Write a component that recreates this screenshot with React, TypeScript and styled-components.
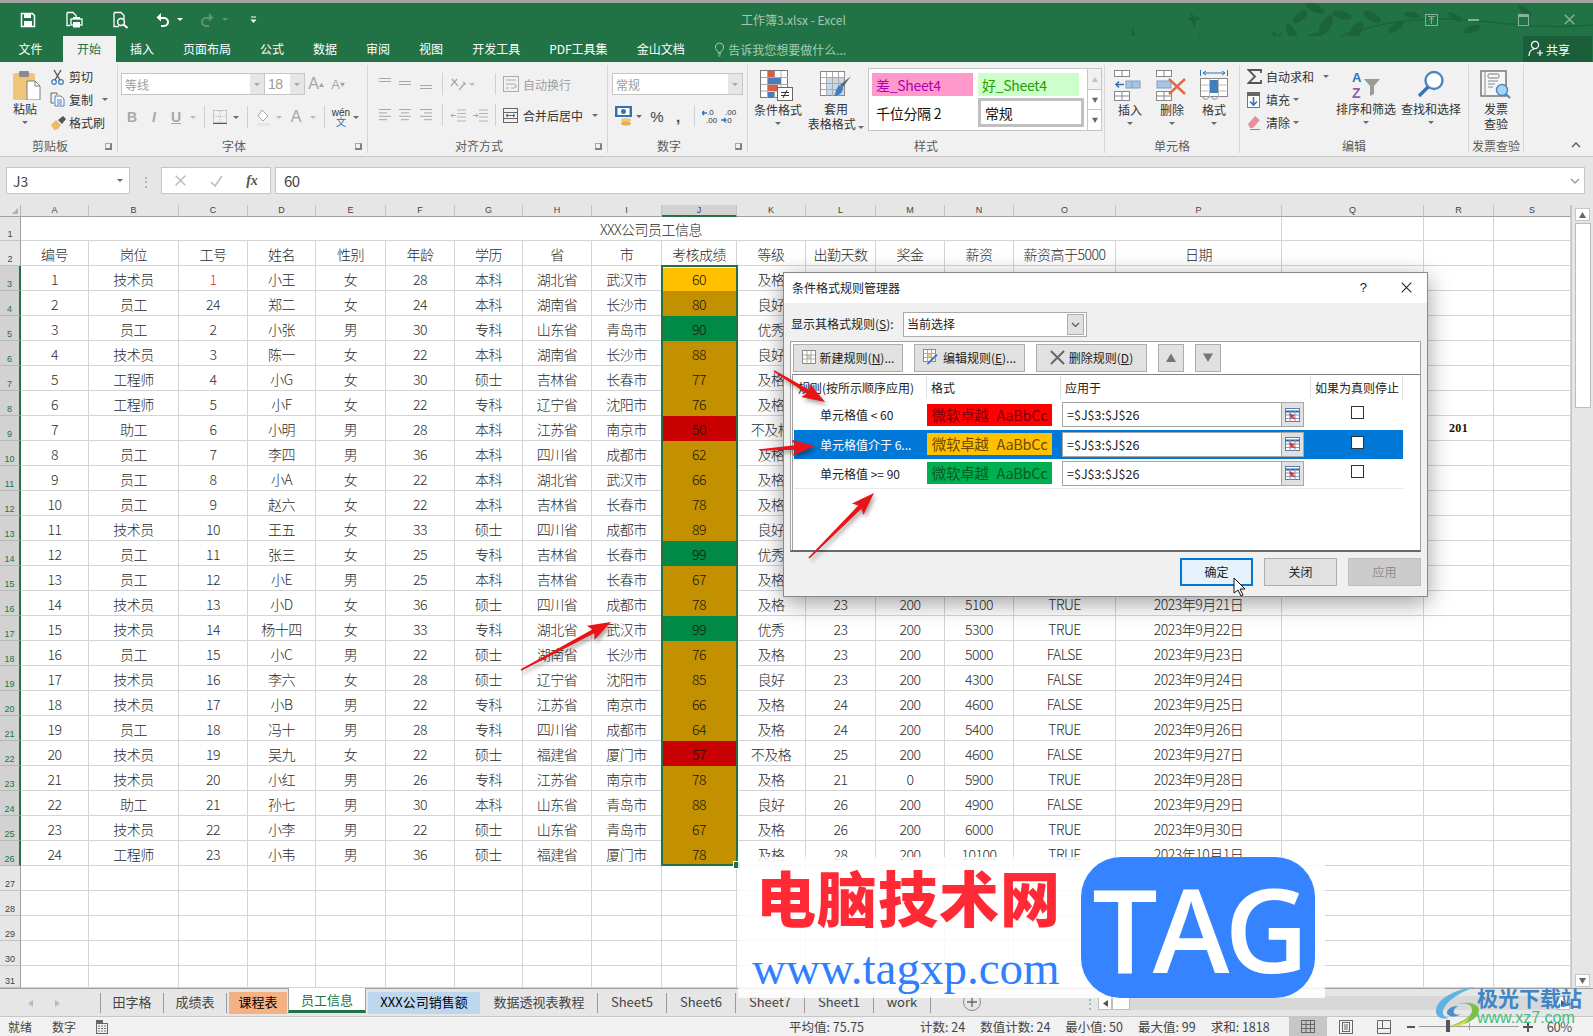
import React from "react";
import styled, { createGlobalStyle } from "styled-components";

const CJK = `"Noto Sans CJK SC","Noto Sans",sans-serif`;
const NARROW = `"Noto Sans CJK SC","Noto Sans",sans-serif`;
const GREEN = "#217346";

const Global = createGlobalStyle`
  html, body { margin: 0; padding: 0; background: #fff; }
  body { font-family: ${CJK}; font-size: 12px; color: #222; }
  * { box-sizing: border-box; }
`;

const Window = styled.div`
  position: relative; width: 1593px; height: 1036px; overflow: hidden;
  display: flex; flex-direction: column; border-top: 3px solid #a4a4a4; background: #fff;
`;

/* ---------- title ---------- */
const TitleBar = styled.header`
  position: relative; flex: 0 0 33px; background: ${GREEN}; display: flex; align-items: center;
`;
const Decor = styled.svg`position: absolute; left: 1120px; top: 0; pointer-events: none;`;
const Qat = styled.div`display: flex; align-items: center; padding-left: 20px; height: 100%; position: relative;`;
const QatItem = styled.span<{ $w: number }>`width: ${p => p.$w}px; display: flex; justify-content: flex-start; align-items: center;`;
const DocTitle = styled.div`
  position: absolute; left: 741px; top: 9px; font-size: 12px; line-height: 16px; color: #a6c7b4; white-space: nowrap;
`;
const WinBtns = styled.div`position: absolute; left: 1420px; top: 0; height: 100%; display: flex; align-items: center;`;
const WinBtn = styled.span<{ $w: number }>`width: ${p => p.$w}px; display: flex; justify-content: center; color: #86b09a;`;

const TabRow = styled.nav`
  position: relative; flex: 0 0 26px; background: ${GREEN}; display: flex; padding-left: 4px; align-items: stretch;
`;
const RibbonTab = styled.span<{ $on?: boolean }>`
  padding: 0 14.5px; line-height: 25px; font-size: 12px; white-space: nowrap;
  color: ${p => (p.$on ? GREEN : "#fff")}; background: ${p => (p.$on ? "#f1f1f1" : "transparent")};
  &:first-child { padding-right: 20px; }
`;
const Tell = styled.span`
  display: flex; align-items: center; gap: 3px; margin-left: 15px; color: #a6cdb7; font-size: 12px;
`;
const Share = styled.div`
  position: absolute; left: 1523px; top: 0; width: 69px; height: 26px; background: #1b5e39; color: #fff;
  display: flex; align-items: center; gap: 2px; padding-left: 5px; font-size: 12px;
`;

/* ---------- ribbon ---------- */
const Ribbon = styled.section`
  flex: 0 0 95px; background: #f1f1f1; border-bottom: 1px solid #c8c8c8; display: flex; padding-top: 3px; position: relative;
`;
const Group = styled.div<{ $w: number }>`
  flex: 0 0 ${p => p.$w}px; height: 88px; border-right: 1px solid #d6d6d6; display: flex; flex-direction: column;
`;
const GroupBody = styled.div<{ $pt?: number; $pl?: number }>`
  flex: 1; min-height: 0; display: flex; padding-top: ${p => p.$pt ?? 0}px; padding-left: ${p => p.$pl ?? 0}px;
`;
const ColBody = styled(GroupBody)`flex-direction: column;`;
const GroupFooter = styled.div<{ $launch?: boolean }>`
  flex: 0 0 14px; display: grid; grid-template-columns: 1fr auto 1fr ${p => (p.$launch ? "17px" : "")}; align-items: center;
  font-size: 12px; line-height: 14px; color: #5c5c5c;
`;
const GroupName = styled.span`grid-column: 2; white-space: nowrap;`;
const Launcher = styled.span`
  grid-column: 4; justify-self: center; width: 7px; height: 7px; border: 1px solid #a8a8a8;
  border-right: 2px solid #808080; border-bottom: 2px solid #808080;
`;
const Collapse = styled.span`position: absolute; left: 1571px; top: 80px; color: #555; display: flex;`;

const Big = styled.div<{ $w: number }>`
  flex: 0 0 ${p => p.$w}px; min-width: 0; display: flex; flex-direction: column; align-items: center; padding-top: 5px;
  font-size: 12px; line-height: 15px; color: #333; white-space: nowrap;
`;
const BigLabel = styled.span<{ $mt?: number }>`margin-top: ${p => p.$mt ?? 1}px; text-align: center;`;
const Caret = styled.i<{ $c?: string }>`
  display: inline-block; width: 0; height: 0; border: 3px solid transparent; border-top: 3.5px solid ${p => p.$c ?? "#6a6a6a"}; border-bottom: 0;
`;
const BigCaret = styled(Caret)`margin-top: 5px;`;
const Stack = styled.div<{ $w: number; $pl?: number }>`
  flex: 0 0 ${p => p.$w}px; min-width: 0; display: flex; flex-direction: column; padding-left: ${p => p.$pl ?? 0}px;
`;
const StackRow = styled.div`
  height: 23px; display: flex; align-items: center; font-size: 12px; color: #333; white-space: nowrap;
`;
const StackIcon = styled.span<{ $w: number }>`flex: 0 0 ${p => p.$w}px; display: flex; align-items: center;`;
const PasteWrap = styled.span`margin-left: 4px; display: flex;`;
const Tools = styled.div<{ $h: number; $mt?: number }>`
  height: ${p => p.$h}px; margin-top: ${p => p.$mt ?? 0}px; display: flex; align-items: center; white-space: nowrap;
`;
const Tool = styled.span<{ $w: number; $dim?: boolean }>`
  flex: 0 0 ${p => p.$w}px; display: flex; justify-content: center; align-items: center;
  color: ${p => (p.$dim ? "#a8a8a8" : "#444")};
`;
const Letter = styled.span<{ $i?: boolean; $u?: boolean; $s?: number; $w?: number; $c?: string }>`
  font: ${p => (p.$i ? "italic " : "")}${p => p.$w ?? 700} ${p => p.$s ?? 14}px "Liberation Sans", sans-serif;
  text-decoration: ${p => (p.$u ? "underline" : "none")};
  ${p => (p.$c ? `color: ${p.$c};` : "")}
`;
const VSep = styled.i<{ $ml?: number; $mr?: number }>`
  flex: 0 0 1px; height: 22px; background: #d0d0d0; margin-left: ${p => p.$ml ?? 5}px; margin-right: ${p => p.$mr ?? 5}px;
`;
const Combo = styled.div<{ $w: number }>`
  flex: 0 0 ${p => p.$w}px; height: 22px; background: #fff; border: 1px solid #c6c6c6; display: flex; align-items: center;
  color: #9c9c9c; font-size: 12px; padding-left: 3px;
`;
const ComboJoin = styled(Combo)`border-left: 0;`;
const ComboValue = styled.span`flex: 1;`;
const ComboSize = styled(ComboValue)`font: 14px "Liberation Sans", sans-serif; letter-spacing: -.5px;`;
const ComboDrop = styled.span`
  flex: 0 0 14px; align-self: stretch; background: #e6e6e6; display: flex; align-items: center; justify-content: center;
`;
const ToolText = styled.span<{ $dim?: boolean; $ml?: number }>`
  font-size: 12px; color: ${p => (p.$dim ? "#a0a0a0" : "#333")}; margin-left: ${p => p.$ml ?? 4}px;
`;
const Wen = styled.span`
  display: flex; flex-direction: column; align-items: center; font: 10px/9px "Liberation Sans", sans-serif; color: #333;
`;
const WenHan = styled.span`color: #2f6fb0; font: 10px/10px ${CJK};`;

const Gallery = styled.div`
  flex: 0 0 229px; height: 63px; margin-top: 3px; margin-left: 4px; display: flex;
`;
const GalleryCells = styled.div`
  flex: 0 0 215px; background: #fff; border: 1px solid #c6c6c6; padding: 4px 3px 2px; display: grid;
  grid-template-columns: 106px 106px; grid-template-rows: 23px 29px; row-gap: 2px; font-size: 14px;
`;
const StyleCell = styled.span<{ $bg?: string; $c?: string; $box?: boolean }>`
  background: ${p => p.$bg ?? "#fff"}; color: ${p => p.$c ?? "#111"}; display: flex; align-items: center; padding-left: 4px;
  font-family: ${NARROW}; white-space: nowrap; letter-spacing: -.3px; margin-right: ${p => (p.$bg ? "5px" : "0")};
  border: ${p => (p.$box ? "3px solid #c0c0c0" : "0")};
`;
const GalleryScroll = styled.div`flex: 0 0 14px; display: flex; flex-direction: column; border: 1px solid #c6c6c6; border-left: 0; background: #fff;`;
const GalleryBtn = styled.span<{ $bg?: string }>`
  flex: 1; display: flex; align-items: center; justify-content: center; background: ${p => p.$bg ?? "#fff"};
  & + & { border-top: 1px solid #c6c6c6; }
`;

/* ---------- formula bar ---------- */
const FormulaBar = styled.div`
  flex: 0 0 48px; background: #e6e6e6; display: flex; align-items: flex-start; padding: 10px 8px 0 6px;
`;
const NameBox = styled.div`
  flex: 0 0 124px; height: 27px; background: #fff; border: 1px solid #c6c6c6; display: flex; align-items: center;
  justify-content: space-between; padding: 0 6px; font: 14px ${NARROW}; color: #444;
`;
const Dots = styled.span`flex: 0 0 31px; height: 27px; display: flex; align-items: center; justify-content: center; color: #999;`;
const FxBox = styled.div`
  flex: 0 0 108px; height: 27px; background: #fff; border: 1px solid #c6c6c6; display: grid; grid-template-columns: repeat(3, 36px);
  align-items: center; justify-items: center; color: #bdbdbd; margin-right: 4px;
`;
const Fx = styled.span`font: italic bold 14px "Liberation Serif", serif; color: #555;`;
const FormulaInput = styled.div`
  flex: 1; height: 27px; background: #fff; border: 1px solid #c6c6c6; display: flex; align-items: center;
  justify-content: space-between; padding: 0 4px 0 8px; font: 15px ${NARROW}; color: #444; letter-spacing: -.5px;
`;

/* ---------- grid ---------- */
const widths = [21, 68, 90, 69, 68, 70, 69, 68, 69, 70, 75, 69, 70, 69, 69, 102, 166, 142, 70, 77];
const letters = "ABCDEFGHIJKLMNOPQRS".split("");

const SheetArea = styled.div`flex: 1; min-height: 0; display: flex;`;
const Grid = styled.div`
  flex: 0 0 1571px; display: grid; overflow: hidden; position: relative;
  grid-template-columns: ${widths.map(w => `${w}px`).join(" ")};
  grid-template-rows: 12px 24px repeat(29, 25px);
  font: 300 14px ${NARROW}; color: #2b2b2b; letter-spacing: -.5px;
`;
const Corner = styled.div`
  background: #e6e6e6; border-right: 1px solid #b5b5b5; border-bottom: 1px solid #9f9f9f; position: relative;
  &::after { content: ""; position: absolute; right: 2px; bottom: 2px; border: 3px solid transparent; border-right-color: #b0b0b0; border-bottom-color: #b0b0b0; }
`;
const ColHead = styled.div<{ $on?: boolean }>`
  background: ${p => (p.$on ? "#d2d2d2" : "#e6e6e6")}; border-right: 1px solid #c4c4c4;
  border-bottom: ${p => (p.$on ? `2px solid ${GREEN}` : "1px solid #9f9f9f")}; letter-spacing: 0;
  font: 9px/11px "Liberation Sans", sans-serif; color: #444; text-align: center;
`;
const RowHead = styled.div<{ $on?: boolean }>`
  background: ${p => (p.$on ? "#d2d2d2" : "#e6e6e6")}; border-bottom: 1px solid ${p => (p.$on ? "#b8b8b8" : "#c4c4c4")};
  border-right: ${p => (p.$on ? `2px solid ${GREEN}` : "1px solid #9f9f9f")}; letter-spacing: 0;
  font: 9px/10px "Liberation Sans", sans-serif; color: ${p => (p.$on ? GREEN : "#444")};
  display: flex; align-items: flex-end; justify-content: center; padding-bottom: 1px;
`;
const Cell = styled.div<{ $fill?: string; $red?: boolean; $span?: number; $bold?: boolean }>`
  display: flex; align-items: center; justify-content: center; white-space: nowrap; overflow: hidden; padding-top: 1px;
  background: ${p => p.$fill ?? "#fff"}; color: ${p => (p.$red ? "#ff2020" : p.$fill ? "#1c1500" : "inherit")};
  border-right: 1px solid ${p => (p.$fill ? p.$fill : "#d4d4d4")}; border-bottom: 1px solid ${p => (p.$fill ? p.$fill : "#d4d4d4")};
  ${p => (p.$span ? `grid-column: span ${p.$span};` : "")}
  ${p => (p.$bold ? `font: bold 12px "Liberation Serif", serif; color: #111; letter-spacing: .4px;` : "")}
`;
const Selection = styled.div`
  position: absolute; grid-column: 11 / 12; grid-row: 4 / 28; inset: -1px -1px 0 -1px; z-index: 2; pointer-events: none;
  border: 2px solid ${GREEN}; box-shadow: inset 0 1px 0 #fff;
`;
const Handle = styled.i`
  position: absolute; right: -4px; bottom: -4px; width: 6px; height: 6px; background: ${GREEN}; outline: 1px solid #fff;
`;
const VScroll = styled.aside`
  flex: 1; background: #e6e6e6; border-left: 1px solid #c6c6c6; display: flex; flex-direction: column; align-items: center;
  padding: 3px 0 1px;
`;
const ScrollBtn = styled.span`
  width: 15px; height: 13px; background: #fff; border: 1px solid #c6c6c6; display: flex; align-items: center; justify-content: center;
`;
const Thumb = styled.span`width: 16px; height: 185px; background: #fff; border: 1px solid #bdbdbd; margin-top: 2px;`;
const Fill = styled.span`flex: 1;`;

/* ---------- sheet tabs ---------- */
const TabsBar = styled.div`
  flex: 0 0 28px; background: #e6e6e6; border-top: 1px solid #9f9f9f; display: flex; align-items: flex-start;
`;
const Nav = styled.div`
  flex: 0 0 101px; height: 20px; margin-top: 4px; display: flex; align-items: center; padding-left: 27px; gap: 20px;
  border-right: 1px solid #9a9a9a; color: #b8b8b8;
`;
const SheetTab = styled.span<{ $w: number; $bg?: string; $on?: boolean }>`
  flex: 0 0 ${p => p.$w}px; display: flex; align-items: center; justify-content: center; white-space: nowrap; font-size: 13px;
  ${p => p.$on
    ? `height: 25px; margin-top: -1px; background:#fff; color:${GREEN}; border-left:1px solid #9f9f9f; border-right:1px solid #9f9f9f; border-bottom:3px solid ${GREEN};`
    : p.$bg
      ? `height: 22px; margin: 3px 1px 0 2px; padding-bottom: 3px; background:${p.$bg}; color:#000;`
      : `height: 20px; margin-top: 4px; padding-bottom: 4px; color:#444; border-right:1px solid #9a9a9a;`}
`;
const AddSheet = styled.span`
  flex: 0 0 18px; height: 18px; border: 1.5px solid #8a8a8a; border-radius: 50%; margin: 4px 0 0 32px; color: #666;
  display: flex; align-items: center; justify-content: center;
`;
const HDots = styled.span`flex: 0 0 16px; margin: 5px 0 0 101px; color: #999; height: 16px; display: flex; justify-content: center; align-items: center;`;
const HScroll = styled.div`
  flex: 1; height: 14px; margin: 7px 23px 0 0; background: #d8d8d8; display: flex; justify-content: space-between;
`;
const HBtns = styled.span`display: flex;`;
const HBtn = styled.span<{ $w: number }>`
  width: ${p => p.$w}px; height: 14px; background: #fff; border: 1px solid #bdbdbd; display: flex; align-items: center; justify-content: center;
`;

/* ---------- status ---------- */
const Status = styled.footer`
  flex: 0 0 19px; background: #f1f1f1; border-top: 1px solid #c6c6c6; display: flex; align-items: center;
  font-size: 12px; color: #444; white-space: nowrap;
`;
const StatusLeft = styled.div`flex: 0 0 789px; display: flex; align-items: center; gap: 20px; padding-left: 8px;`;
const Stat = styled.span<{ $ml?: number }>`margin-left: ${p => p.$ml ?? 15}px; font-family: ${NARROW}; font-size: 12.5px;`;
const Views = styled.div`display: flex; align-self: stretch; margin-left: 19px;`;
const ViewBtn = styled.span<{ $on?: boolean }>`
  width: 38px; display: flex; align-items: center; justify-content: center; background: ${p => (p.$on ? "#c6c6c6" : "transparent")}; color: #555;
`;
const Zoom = styled.div`display: flex; align-items: center; margin-left: 4px; color: #555;`;
const ZoomTrack = styled.span`
  position: relative; width: 100px; height: 1px; background: #9a9a9a; margin: 0 4px;
`;
const ZoomThumb = styled.i`position: absolute; left: 27px; top: -6px; width: 4px; height: 12px; background: #555;`;
const ZoomTick = styled.i`position: absolute; left: 50px; top: -3px; width: 1px; height: 7px; background: #9a9a9a;`;
const ZoomText = styled.span`margin-left: 14px; font: 13px ${NARROW}; letter-spacing: -.4px;`;

/* ---------- dialog ---------- */
const Dialog = styled.div`
  position: absolute; left: 783px; top: 269px; width: 645px; height: 325px; background: #f0f0f0; border: 1px solid #8a8a8a;
  box-shadow: 0 6px 22px rgba(0,0,0,.38); z-index: 5; display: flex; flex-direction: column; color: #222;
  font-size: 12px;
`;
const DlgTitle = styled.div`
  flex: 0 0 30px; background: #fff; display: flex; align-items: center; padding: 0 8px 2px; font-size: 12px;
`;
const DlgTitleText = styled.span`flex: 1;`;
const DlgHelp = styled.span`font: 13px "Liberation Sans", sans-serif; margin-right: 34px;`;
const DlgClose = styled.span`margin-right: 7px; display: flex; color: #333;`;
const ShowRow = styled.div`
  flex: 0 0 25px; margin: 9px 7px 4px; display: flex; align-items: center; font-family: ${CJK}; white-space: nowrap;
`;
const ShowLabel = styled.span`flex: 0 0 112px; margin-top: -3px;`;
const ShowSelect = styled.div`
  flex: 0 0 184px; height: 25px; background: #fff; border: 1px solid #ababab; display: flex; align-items: center; padding: 0 2px 0 3px;
`;
const ShowValue = styled(({ className, children }: { className?: string; children: React.ReactNode }) => <span className={className}>{children}</span>)`
  flex: 1; margin-top: -2px;
`;
const ShowBtn = styled.span`
  flex: 0 0 17px; height: 21px; background: #e1e1e1; border: 1px solid #adadad; display: flex; align-items: center; justify-content: center; color: #444;
`;
const Panel = styled.div`
  flex: 0 0 211px; margin: 0 6px; background: #fff; border: 1px solid #a0a0a0; border-bottom: 2px solid #696969; display: flex; flex-direction: column;
`;
const PanelBar = styled.div`
  flex: 0 0 32px; display: flex; align-items: center; padding: 0 2px; gap: 11px;
`;
const DlgBtn = styled.span<{ $w: number }>`
  flex: 0 0 ${p => p.$w}px; height: 28px; background: #e1e1e1; border: 1px solid #adadad; display: flex; align-items: center; justify-content: center; gap: 4px;
  white-space: nowrap; padding-bottom: 2px;
`;
const ListBox = styled.div`flex: 1; border-top: 1px solid #808080; border-left: 1px solid #a0a0a0; margin-left: 1px; padding-left: 1px;`;
const ruleCols = "133px 134px 250px 92px";
const ListHead = styled.div`
  height: 25px; width: 609px; display: grid; grid-template-columns: ${ruleCols}; align-items: center;
`;
const ListHeadCell = styled.span`
  height: 23px; display: flex; align-items: center; padding-left: 4px; border-right: 1px solid #e0e0e0; white-space: nowrap;
`;
const RuleRow = styled.div<{ $on?: boolean; $last?: boolean }>`
  height: 29.5px; width: 609px; display: grid; grid-template-columns: ${ruleCols}; align-items: center;
  background: ${p => (p.$on ? "#0078d7" : "transparent")}; color: ${p => (p.$on ? "#fff" : "#222")};
  border-bottom: ${p => (p.$last ? "1px solid #e8e8e8" : "0")};
`;
const RuleName = styled.span`padding-left: 26px; white-space: pre; font-family: ${NARROW}; font-size: 12px;`;
const Preview = styled.span<{ $bg: string; $c: string }>`
  width: 125px; height: 22px; background: ${p => p.$bg}; color: ${p => p.$c}; display: flex; align-items: center; justify-content: center;
  font: 14.5px/22px ${NARROW}; white-space: nowrap; gap: 8px; letter-spacing: -.3px;
`;
const Applies = styled.span`
  width: 242px; height: 25px; margin-left: 1px; background: #fff; border: 1px solid #a6a6a6; display: flex; align-items: center;
  color: #222; font: 12.5px ${NARROW}; padding-left: 4px;
`;
const AppliesText = styled.span`flex: 1;`;
const Picker = styled.span`
  flex: 0 0 22px; align-self: stretch; background: #e1e1e1; border-left: 1px solid #a6a6a6; display: flex; align-items: center; justify-content: center;
`;
const Check = styled.span`
  justify-self: center; width: 13px; height: 13px; background: #fff; border: 1px solid #333; margin-top: -4px;
`;
const DlgFoot = styled.div`
  flex: 1; display: flex; justify-content: flex-end; gap: 11px; padding: 6px 6px 0 0; align-items: flex-start;
`;
const FootBtn = styled.span<{ $kind?: "primary" | "off" }>`
  width: 73px; height: 28px; display: flex; align-items: center; justify-content: center; padding-bottom: 2px;
  background: ${p => (p.$kind === "primary" ? "#e5f1fb" : p.$kind === "off" ? "#cccccc" : "#e1e1e1")};
  border: ${p => (p.$kind === "primary" ? "2px solid #0078d7" : p.$kind === "off" ? "1px solid #bfbfbf" : "1px solid #adadad")};
  color: ${p => (p.$kind === "off" ? "#8c8c8c" : "#222")};
`;

/* ---------- overlays ---------- */
const Arrows = styled.svg`
  position: absolute; left: 0; top: 0; z-index: 7; pointer-events: none; filter: drop-shadow(2px 3px 2px rgba(0,0,0,.35));
`;
const Cursor = styled.svg`position: absolute; left: 1233px; top: 574px; z-index: 8;`;
const Watermark = styled.div`
  position: absolute; left: 738px; top: 854px; width: 587px; height: 141px; background: rgba(255,255,255,.86); z-index: 3;
  padding: 8px 0 0 18px; display: flex; flex-direction: column;
`;
const WmCn = styled.span`
  font: 900 60px/62px ${CJK}; color: #ff2a35; letter-spacing: 1px; white-space: nowrap;
`;
const WmUrl = styled.span`
  font: 47px/52px "Liberation Serif", serif; color: #2f7fff; margin: 15px 0 0 -4px; white-space: nowrap;
`;
const TagTile = styled.div`
  position: absolute; left: 1081px; top: 854px; width: 234px; height: 141px; border-radius: 40px; background: rgba(47,127,255,.97); z-index: 4;
  display: flex; align-items: center; justify-content: center; color: #fff; overflow: hidden;
  font: 600 116px/1 "Open Sans", "Liberation Sans", sans-serif; letter-spacing: -5px;
`;
const Brand = styled.div`
  position: absolute; left: 1433px; top: 982px; z-index: 6; display: flex; pointer-events: none;
`;
const BrandText = styled.div`display: flex; flex-direction: column; margin-left: -2px;`;
const BrandCn = styled.span`font: bold 21px/24px ${CJK}; color: #3e86c6; white-space: nowrap;`;
const BrandUrl = styled.span`font: 16px/16px "Liberation Sans", sans-serif; color: #3fbf7f; white-space: nowrap; margin-top: 1px;`;

/* ---------- icons ---------- */
const S = ({ w, h, children }: { w: number; h: number; children: React.ReactNode }) => (
  <svg width={w} height={h} viewBox={`0 0 ${w} ${h}`} fill="none">{children}</svg>
);
const SaveIcon = () => (
  <S w={16} h={16}><path d="M1.5 1.5h11l2 2v11h-13z" stroke="#fff" strokeWidth="1.5" /><rect x="4" y="1" width="7" height="5" fill="#fff" /><rect x="4" y="9" width="8" height="6" fill="#fff" /></S>
);
const PrintIcon = () => (
  <S w={18} h={18}><path d="M2 1.5h6l3 3v4M2 1.5v13h3" stroke="#fff" strokeWidth="1.3" /><rect x="6" y="8" width="11" height="6" stroke="#fff" fill={GREEN} strokeWidth="1.3" /><rect x="8" y="11" width="7" height="5.5" fill="#fff" /><rect x="8" y="6" width="7" height="2" fill="#fff" /></S>
);
const PreviewIcon = () => (
  <S w={17} h={18}><path d="M2 1.5h7l3 3v4M2 1.5v14h5" stroke="#fff" strokeWidth="1.3" /><circle cx="9" cy="11" r="3.4" stroke="#fff" strokeWidth="1.5" /><path d="M11.5 13.5l4 3.5" stroke="#fff" strokeWidth="2" /></S>
);
const UndoIcon = ({ c = "#fff" }: { c?: string }) => (
  <S w={16} h={16}><path d="M6 1L1.5 5.5 6 9.5V7h3a3 3 0 0 1 0 6H6v2h3a5 5 0 0 0 0-10H6z" fill={c} /></S>
);
const RedoIcon = () => (
  <S w={16} h={16}><path d="M10 1l4.5 4.5L10 9.5V7H7a3 3 0 0 0 0 6h3v2H7A5 5 0 0 1 7 5h3z" fill="#5d9576" /></S>
);
const QatMore = () => (
  <S w={7} h={8}><path d="M1 1h5" stroke="#fff" /><path d="M0.5 3.5h6L3.5 7z" fill="#fff" /></S>
);
const CloseGlyph = ({ s = 11, c = "currentColor", w = 1.2 }: { s?: number; c?: string; w?: number }) => (
  <svg width={s} height={s} viewBox="0 0 11 11"><path d="M.7.7l9.6 9.6M10.3.7L.7 10.3" stroke={c} strokeWidth={w} /></svg>
);
const Bulb = () => (
  <S w={11} h={15}><path d="M5.5 1a4.2 4.2 0 0 0-2.4 7.6c.6.5.8 1 .9 2h3c.1-1 .3-1.5.9-2A4.2 4.2 0 0 0 5.5 1zM4 12h3M4.5 14h2" stroke="#a6cdb7" /></S>
);
const PersonPlus = () => (
  <S w={16} h={18}><circle cx="7" cy="5" r="3.6" stroke="#fff" strokeWidth="1.2" /><path d="M1 16c0-4 2.5-6.5 5-7M9 13h6M12 10v6" stroke="#fff" strokeWidth="1.2" /></S>
);

const PasteIcon = () => (
  <S w={28} h={30}><rect x="0" y="3" width="22" height="27" rx="2" fill="#efc57a" /><rect x="6" y="1" width="10" height="6" rx="1" fill="#8c8c8c" /><path d="M14 11h8l5 5v14H14z" fill="#fff" stroke="#7c7c7c" /><path d="M22 11v5h5" stroke="#7c7c7c" /></S>
);
const CutIcon = () => (
  <S w={15} h={16}><circle cx="4" cy="13" r="2.3" stroke="#3f7fbe" strokeWidth="1.3" /><circle cx="11" cy="13" r="2.3" stroke="#3f7fbe" strokeWidth="1.3" /><path d="M5 11L11 1M10 11L4 1" stroke="#555" strokeWidth="1.4" /></S>
);
const CopyIcon = () => (
  <S w={15} h={15}><path d="M1 1h6v2M1 1v10h3" stroke="#666" /><path d="M5 4h6l3 3v7H5z" stroke="#4a7ebb" fill="#fff" /><path d="M7 8h5M7 10h5M7 12h5" stroke="#4a7ebb" /></S>
);
const BrushIcon = () => (
  <S w={16} h={14}><path d="M1 9l5-5 5 5-3 4-4 1z" fill="#eab96a" /><path d="M8 4l5-4 3 3-4 5z" fill="#555" /></S>
);
const ALetter = ({ c = "#a6a6a6", s = 15 }: { c?: string; s?: number }) => (
  <Letter $s={s} $c={c} $w={400}>A</Letter>
);
const BorderIcon = () => (
  <S w={14} h={14}><rect x=".5" y=".5" width="13" height="12" stroke="#999" strokeDasharray="1 1" /><path d="M7 1v12M1 6.5h12" stroke="#bbb" strokeDasharray="1 1" /><path d="M0 13.5h14" stroke="#555" /></S>
);
const FillIcon = () => (
  <S w={16} h={17}><path d="M7 1l6 6-5 5-5-5z" stroke="#a4a4a4" fill="#fff" /><path d="M2 15.5h13" stroke="#e6e6e6" strokeWidth="3" /></S>
);
const Lines = ({ kind }: { kind: "t" | "m" | "b" | "l" | "c" | "r" }) => {
  const rows: Record<string, [number, number][]> = {
    t: [[1, 13], [1, 13]], m: [[1, 13], [1, 13]], b: [[1, 13], [1, 13]],
    l: [[1, 13], [1, 9], [1, 13], [1, 9]], c: [[1, 13], [3, 11], [1, 13], [3, 11]], r: [[1, 13], [5, 13], [1, 13], [5, 13]],
  };
  const top = kind === "t" ? 1 : kind === "m" ? 4 : kind === "b" ? 8 : 1;
  const gap = "tmb".includes(kind) ? 3 : 3.4;
  return <S w={14} h={14}>{rows[kind].map(([a, b], i) => <path key={i} d={`M${a} ${top + i * gap + .5}H${b}`} stroke="#a8a8a8" />)}</S>;
};
const OrientIcon = () => (
  <S w={16} h={15}><path d="M1 9l6-7M2 2l6 7M9 13l6-7M13 5l2 1v2" stroke="#a8a8a8" strokeWidth="1.2" /></S>
);
const WrapIcon = () => (
  <S w={16} h={16}><rect x=".5" y=".5" width="15" height="15" stroke="#ababab" /><path d="M3 4h10M3 8h8l2 1v2l-2 1H8M3 12h3" stroke="#ababab" /></S>
);
const MergeIcon = () => (
  <S w={15} h={15}><rect x=".5" y=".5" width="14" height="14" stroke="#666" /><path d="M1 4.5h13M1 10.5h13" stroke="#666" /><path d="M3 7.5h9M3 7.5l2-1.5M3 7.5l2 1.5M12 7.5l-2-1.5M12 7.5l-2 1.5" stroke="#2e75b6" /></S>
);
const Indent = ({ out }: { out?: boolean }) => (
  <S w={16} h={13}><path d="M7 1h9M7 4.5h9M7 8h9M7 12h9" stroke="#b4b4b4" /><path d={out ? "M6 6.5H1m2-2l-2 2 2 2" : "M1 6.5h5m-2-2l2 2-2 2"} stroke="#a8a8a8" /></S>
);
const MoneyIcon = () => (
  <S w={18} h={20}><rect x="0" y="0" width="17" height="11" fill="#2e75b6" /><rect x="2.5" y="2" width="12" height="7" fill="#fff" /><circle cx="8.5" cy="5.5" r="2.5" fill="#2e75b6" /><ellipse cx="11" cy="14" rx="5" ry="2" fill="#efc57a" /><ellipse cx="11" cy="17.5" rx="5" ry="2" fill="#e3ae54" /></S>
);
const Decimal = ({ more }: { more?: boolean }) => (
  <S w={17} h={15}>
    <text x={more ? 5 : 4} y="6" fontSize="8" fontFamily="Liberation Sans" fill="#333">{more ? ".0" : ".00"}</text>
    <text x="4" y="14" fontSize="8" fontFamily="Liberation Sans" fill="#333">{more ? ".00" : ".0"}</text>
    <path d={more ? "M5 4H0m2-2L0 4l2 2" : "M0 11h5m-2-2l2 2-2 2"} stroke="#2e75b6" strokeWidth="1.3" />
  </S>
);
const CondIcon = () => (
  <S w={36} h={31}>
    <rect x=".5" y=".5" width="27" height="27" stroke="#777" fill="#fff" />
    <path d="M7.5 1v27M14.5 1v27M21 1v27M1 7.5h27M1 14.5h27M1 21h27" stroke="#aaa" />
    <rect x="8" y="1" width="6.5" height="6" fill="#d9603c" /><rect x="8" y="8" width="13" height="6" fill="#4a7ebb" />
    <rect x="8" y="15" width="10" height="6" fill="#d9603c" /><rect x="8" y="22" width="6" height="5" fill="#4a7ebb" />
    <rect x="17.5" y="17.5" width="15" height="13" stroke="#666" fill="#fff" />
    <path d="M21 22.5h8M21 25.5h8M27 20l-4 8" stroke="#333" />
  </S>
);
const TableIcon = () => (
  <S w={32} h={30}>
    <rect x=".5" y="1.5" width="24" height="24" stroke="#888" fill="#fff" />
    <rect x="6" y="7" width="18" height="18" fill="#c8d8ec" />
    <path d="M6.5 2v24M12.5 2v24M18.5 2v24M1 7.5h24M1 13.5h24M1 19.5h24" stroke="#aaa" />
    <path d="M31 6l-8 11-3-2z" fill="#666" /><path d="M20 15l3 2c0 6-4 9-9 9 2-2 1-8 6-11z" fill="#3f7fbe" />
  </S>
);
const CellIcon = ({ mode }: { mode: "ins" | "del" }) => (
  <S w={32} h={31}>
    <rect x=".5" y=".5" width="15" height="6" stroke="#888" fill="#fff" /><path d="M8 1v6" stroke="#888" />
    <rect x=".5" y="21.5" width="15" height="9" stroke="#888" fill="#fff" /><path d="M8 22v9M1 26h15" stroke="#888" />
    {mode === "ins"
      ? <><rect x="12" y="11" width="14" height="7" fill="#a9c4e4" stroke="#7f9fc6" /><path d="M18 11v7" stroke="#7f9fc6" /><path d="M10 14.5H2m3-3l-3 3 3 3" stroke="#2e75b6" strokeWidth="1.6" /></>
      : <><rect x="1" y="11" width="14" height="7" fill="#a9c4e4" stroke="#7f9fc6" /><path d="M13 9l16 15M29 9L13 24" stroke="#e06a45" strokeWidth="2.4" /></>}
  </S>
);
const FormatIcon = () => (
  <S w={28} h={31}>
    <path d="M3 3h22M3 3l3-2M3 3l3 2M25 3l-3-2M25 3l-3 2M.5 0v6M27.5 0v6" stroke="#2e75b6" />
    <rect x=".5" y="8.5" width="27" height="18" stroke="#888" fill="#fff" />
    <path d="M9.5 9v18M18.5 9v18M1 15h27M1 21h27" stroke="#bbb" />
    <rect x="10" y="10" width="8" height="13" fill="#3f7fbe" />
    <path d="M3 27c0 3 5 3 6 0M12 27c0 3 5 3 6 0" stroke="#888" />
  </S>
);
const SigmaIcon = () => (
  <S w={15} h={15}><path d="M14 4V1H1.5L8 7.5 1.5 14H14v-3" stroke="#555" strokeWidth="1.8" /></S>
);
const FillDown = () => (
  <S w={13} h={16}><rect x=".5" y=".5" width="12" height="15" stroke="#777" fill="#fff" /><rect x="0" y="0" width="13" height="4" fill="#666" /><path d="M6.5 5v8M3 9.5l3.5 3.5L10 9.5" stroke="#2e75b6" strokeWidth="1.6" /></S>
);
const Eraser = () => (
  <S w={14} h={15}><path d="M1 9l7-8 5 4-7 8H3z" fill="#ea8e9c" /><path d="M3 14.5h10" stroke="#888" /></S>
);
const SortIcon = () => (
  <S w={30} h={30}>
    <text x="1" y="12" fontSize="13" fontWeight="bold" fontFamily="Liberation Sans" fill="#2e75b6">A</text>
    <text x="1" y="28" fontSize="14" fontWeight="bold" fontFamily="Liberation Sans" fill="#8c5fb0">Z</text>
    <path d="M13 9h16l-6 7v8l-4 2V16z" fill="#9a9a9a" />
  </S>
);
const FindIcon = () => (
  <S w={28} h={28}><circle cx="17" cy="10.5" r="8.5" stroke="#4a86c5" strokeWidth="2.4" fill="#fff" /><path d="M11 17L2 26" stroke="#3a72ab" strokeWidth="3.4" /></S>
);
const InvoiceIcon = () => (
  <S w={32} h={30}>
    <rect x="1" y="1" width="25" height="25" stroke="#777" strokeWidth="1.5" fill="#f6f6f6" />
    <rect x="8" y="4" width="11" height="4" rx="1.5" stroke="#777" />
    <path d="M5 2v23M8 11h10M8 14h7M8 17h5" stroke="#888" />
    <circle cx="22" cy="20" r="5.5" stroke="#4a86c5" strokeWidth="1.4" fill="#a9d3f2" /><path d="M26 24l4 4" stroke="#4a86c5" strokeWidth="2" />
  </S>
);
const Chevron = ({ up, c = "#666", s = 10 }: { up?: boolean; c?: string; s?: number }) => (
  <svg width={s} height={s * .6} viewBox="0 0 10 6" fill="none"><path d={up ? "M1 5l4-4 4 4" : "M1 1l4 4 4-4"} stroke={c} strokeWidth="1.4" /></svg>
);
const Tri = ({ dir, c = "#777", s = 7 }: { dir: "u" | "d" | "l" | "r"; c?: string; s?: number }) => {
  const d = { u: "M0 7L3.5 1 7 7z", d: "M0 1h7L3.5 7z", l: "M6 0v7L1 3.5z", r: "M1 0v7l5-3.5z" }[dir];
  return <svg width={s} height={s} viewBox="0 0 7 7"><path d={d} fill={c} /></svg>;
};
const DialogGridIcon = () => (
  <S w={14} h={14}><rect x=".5" y=".5" width="13" height="13" stroke="#8a8a8a" fill="#fff" /><rect x="5" y="5" width="4" height="4" fill="#f3c98a" /><path d="M5 1v12M9 1v12M1 5h12M1 9h12" stroke="#aaa" /></S>
);
const EditRuleIcon = () => (
  <S w={16} h={16}><rect x=".5" y=".5" width="12" height="12" stroke="#8a8a8a" fill="#fff" /><rect x="4.5" y="4.5" width="4" height="4" fill="#f3c98a" /><path d="M4.5 1v12M8.5 1v12M1 4.5h12M1 8.5h12" stroke="#aaa" /><path d="M15 6L6 15l-2 .5.5-2L13 5z" fill="#3f7fbe" /></S>
);
const PickerIcon = () => (
  <S w={15} h={14}><rect x=".5" y=".5" width="14" height="13" stroke="#5a7ea8" fill="#fff" /><path d="M1 3.5h13" stroke="#2e64a8" strokeWidth="2" /><path d="M5 3v11M10 3v11M1 7h13M1 10.5h13" stroke="#7b9cc4" /><path d="M4 5l6 2.5-2 1 2.5 2-1 1-2.5-2-1 2z" fill="#d8372a" /></S>
);
const MacroIcon = () => (
  <S w={12} h={14}><rect x=".5" y="3.5" width="11" height="10" stroke="#666" /><rect x="0" y="0" width="7" height="4" fill="#666" /><path d="M2 6h2M5 6h2M8 6h2M2 8.5h2M5 8.5h2M8 8.5h2M2 11h2M5 11h2M8 11h2" stroke="#777" /></S>
);
const NormalView = () => (
  <S w={14} h={13}><rect x=".5" y=".5" width="13" height="12" stroke="#666" /><path d="M5 1v12M9.5 1v12M1 4.5h13M1 8.5h13" stroke="#666" /></S>
);
const LayoutView = () => (
  <S w={14} h={14}><rect x=".5" y=".5" width="13" height="13" stroke="#666" /><rect x="3.5" y="2.5" width="7" height="9" stroke="#666" /><path d="M5 5h4M5 7h4M5 9h4" stroke="#666" /></S>
);
const BreakView = () => (
  <S w={14} h={14}><path d="M.5 13.5V.5h13v13zM.5 8.5h13" stroke="#666" /><path d="M5.5 1v7" stroke="#666" /></S>
);

/* ---------- decoration ---------- */
const leaves: [number, number, number, number, number][] = [
  [180, 14, 9, 4, -40], [195, 5, 10, 4, 25], [206, 22, 11, 5, -60], [222, 12, 10, 4, 15], [172, 30, 10, 4, 60],
  [192, 36, 11, 5, -25], [214, 42, 12, 5, 35], [236, 28, 11, 5, -50], [252, 14, 10, 4, 30], [232, 52, 12, 4, -30],
  [262, 38, 10, 4, 20], [276, 24, 9, 3.5, -35], [200, 54, 11, 4, 45], [292, 12, 8, 3, 10], [175, 50, 9, 4, -50],
  [335, 14, 8, 3, 30], [352, 26, 9, 3.5, -20], [405, 8, 8, 3, 40],
];
const TitleDecor = () => (
  <Decor width="473" height="59" viewBox="0 0 473 59" fill="#1c6339">
    {leaves.map(([x, y, a, b, r], i) => <ellipse key={i} cx={x} cy={y} rx={a} ry={b} transform={`rotate(${r} ${x} ${y})`} />)}
    <path d="M170 58C215 30 260 18 310 16s90 12 163 6" stroke="#1c6339" strokeWidth="1.5" fill="none" />
    <path d="M12 24l3 6 1 8-4-3-1-4zM18 22l-5 8" />
    <path d="M70 6l4 8 8 1-6 3-1 7-3-7-5-2 4-2zM78 30l5 5 9 1-6 3 1 7-5-5-7 1 4-4z" />
    <path d="M152 28l6 4 4-3-2 6 1 10-5-6-5 1 3-4z" />
  </Decor>
);
const arrowPoly = (tx: number, ty: number, hx: number, hy: number) => {
  const dx = hx - tx, dy = hy - ty, L = Math.hypot(dx, dy), ux = dx / L, uy = dy / L, nx = -uy, ny = ux;
  const P = (a: number, w: number) => `${tx + ux * a + nx * w},${ty + uy * a + ny * w}`;
  const neck = L - 20;
  return [P(0, .8), P(neck, 2.2), P(neck - 3, 8), P(L, 0), P(neck - 3, -8), P(neck, -2.2), P(0, -.8)].join(" ");
};
const arrowList: [number, number, number, number][] = [
  [774, 368, 825, 399], [760, 447, 815, 443], [809, 555, 874, 490], [521, 667, 611, 619],
];
const Swirl = () => (
  <S w={46} h={44}>
    <path d="M42 2C22 4 4 14 3 25c-1 7 6 10 13 8C9 32 8 26 13 20 20 11 31 6 42 2z" fill="#5fb2e2" />
    <path d="M20 21c8-4 18-3 19 3 1 7-10 13-22 17 13 0 27-5 29-15 1-8-14-11-26-5z" fill="#7cc04b" />
    <path d="M17 41c8-1 15-5 20-9-3 6-10 11-20 9z" fill="#e9d84a" />
    <path d="M14 27c1-4 6-6 11-6-3 2-5 4-4 7 1 2 5 2 7 1-4 4-15 3-14-2z" fill="#4d8fc9" />
  </S>
);

/* ---------- data ---------- */
const rows: (string | number)[][] = [
  [1,"技术员",1,"小王","女",28,"本科","湖北省","武汉市",60,"及格"],
  [2,"员工",24,"郑二","女",24,"本科","湖南省","长沙市",80,"良好"],
  [3,"员工",2,"小张","男",30,"专科","山东省","青岛市",90,"优秀"],
  [4,"技术员",3,"陈一","女",22,"本科","湖南省","长沙市",88,"良好"],
  [5,"工程师",4,"小G","女",30,"硕士","吉林省","长春市",77,"及格"],
  [6,"工程师",5,"小F","女",22,"专科","辽宁省","沈阳市",76,"及格"],
  [7,"助工",6,"小明","男",28,"本科","江苏省","南京市",50,"不及格"],
  [8,"员工",7,"李四","男",36,"本科","四川省","成都市",62,"及格"],
  [9,"员工",8,"小A","女",22,"本科","湖北省","武汉市",66,"及格"],
  [10,"员工",9,"赵六","女",22,"本科","吉林省","长春市",78,"及格"],
  [11,"技术员",10,"王五","女",33,"硕士","四川省","成都市",89,"良好"],
  [12,"员工",11,"张三","女",25,"专科","吉林省","长春市",99,"优秀"],
  [13,"员工",12,"小E","男",25,"本科","吉林省","长春市",67,"及格"],
  [14,"技术员",13,"小D","女",36,"硕士","四川省","成都市",78,"及格",23,200,5100,"TRUE","2023年9月21日"],
  [15,"技术员",14,"杨十四","女",33,"专科","湖北省","武汉市",99,"优秀",23,200,5300,"TRUE","2023年9月22日"],
  [16,"员工",15,"小C","男",22,"硕士","湖南省","长沙市",76,"及格",23,200,5000,"FALSE","2023年9月23日"],
  [17,"技术员",16,"李六","女",28,"硕士","辽宁省","沈阳市",85,"良好",23,200,4300,"FALSE","2023年9月24日"],
  [18,"技术员",17,"小B","男",22,"专科","江苏省","南京市",66,"及格",24,200,4600,"FALSE","2023年9月25日"],
  [19,"员工",18,"冯十","男",28,"专科","四川省","成都市",64,"及格",24,200,5400,"TRUE","2023年9月26日"],
  [20,"技术员",19,"吴九","女",22,"硕士","福建省","厦门市",57,"不及格",25,200,4600,"FALSE","2023年9月27日"],
  [21,"技术员",20,"小红","男",26,"专科","江苏省","南京市",78,"及格",21,0,5900,"TRUE","2023年9月28日"],
  [22,"助工",21,"孙七","男",30,"本科","山东省","青岛市",88,"良好",26,200,4900,"FALSE","2023年9月29日"],
  [23,"技术员",22,"小李","男",22,"硕士","山东省","青岛市",67,"及格",26,200,6000,"TRUE","2023年9月30日"],
  [24,"工程师",23,"小韦","男",36,"硕士","福建省","厦门市",78,"及格",28,200,10100,"TRUE","2023年10月1日"],
];
const heads = ["编号","岗位","工号","姓名","性别","年龄","学历","省","市","考核成绩","等级","出勤天数","奖金","薪资","薪资高于5000","日期"];
const scoreFill = (v: number, i: number) => {
  if (i === 0) return "#ffc000";
  if (v < 60) return "#c90000";
  if (v >= 90) return "#008a46";
  return "#c39100";
};
const tabs: { t: string; w: number; bg?: string; on?: boolean }[] = [
  { t: "田字格", w: 63 }, { t: "成绩表", w: 63 }, { t: "课程表", w: 58, bg: "#f4b183" }, { t: "员工信息", w: 78, on: true },
  { t: "XXX公司销售额", w: 112, bg: "#bdd7ee" }, { t: "数据透视表教程", w: 117 }, { t: "Sheet5", w: 69 }, { t: "Sheet6", w: 69 },
  { t: "Sheet7", w: 69 }, { t: "Sheet1", w: 69 }, { t: "work", w: 57 },
];
const ruleData = [
  { n: "单元格值 < 60", bg: "#ff0000", c: "#7a0008" },
  { n: "单元格值介于 6...", bg: "#ffc000", c: "#6e4a00", on: true },
  { n: "单元格值 >= 90", bg: "#00b050", c: "#045c24" },
];

export default function App() {
  const grid: React.ReactNode[] = [];
  grid.push(<Corner key="corner" />);
  letters.forEach(l => grid.push(<ColHead key={l} $on={l === "J"}>{l}</ColHead>));
  for (let r = 1; r <= 31; r++) {
    const on = r >= 3 && r <= 26;
    grid.push(<RowHead key={`h${r}`} $on={on}>{r}</RowHead>);
    if (r === 1) {
      grid.push(<Cell key="title" $span={16}>XXX公司员工信息</Cell>);
      ["q", "r", "s"].forEach(k => grid.push(<Cell key={`t${k}`} />));
      continue;
    }
    for (let c = 0; c < 19; c++) {
      const key = `${r}-${c}`;
      let v: string | number = "";
      if (r === 2) v = heads[c] ?? "";
      else if (on) v = rows[r - 3][c] ?? "";
      const isScore = on && c === 9;
      const bold = r === 9 && c === 17;
      if (bold) v = "201";
      grid.push(
        <Cell key={key} $fill={isScore ? scoreFill(Number(v), r - 3) : undefined} $red={r === 3 && c === 2} $bold={bold}>{v}</Cell>
      );
    }
  }

  return (
    <Window>
      <Global />
      <TitleBar>
        <TitleDecor />
        <Qat>
          <QatItem $w={45}><SaveIcon /></QatItem>
          <QatItem $w={47}><PrintIcon /></QatItem>
          <QatItem $w={43}><PreviewIcon /></QatItem>
          <QatItem $w={22}><UndoIcon /></QatItem>
          <QatItem $w={22}><Caret $c="#fff" /></QatItem>
          <QatItem $w={23}><RedoIcon /></QatItem>
          <QatItem $w={28}><Caret $c="#5d9576" /></QatItem>
          <QatItem $w={10}><QatMore /></QatItem>
        </Qat>
        <DocTitle>工作簿3.xlsx - Excel</DocTitle>
        <WinBtns>
          <WinBtn $w={22}><S w={13} h={12}><rect x=".5" y=".5" width="12" height="11" stroke="#86b09a" /><path d="M6.5 10V4M4 6l2.5-2.5L9 6M3 2.5h7" stroke="#86b09a" /></S></WinBtn>
          <WinBtn $w={62}><S w={11} h={2}><rect width="11" height="2" fill="#86b09a" /></S></WinBtn>
          <WinBtn $w={38}><S w={11} h={12}><rect x=".5" y=".5" width="10" height="11" stroke="#86b09a" /><rect width="11" height="3" fill="#86b09a" /></S></WinBtn>
          <WinBtn $w={54}><CloseGlyph s={11} w={1.5} /></WinBtn>
        </WinBtns>
      </TitleBar>
      <TabRow>
        {["文件", "开始", "插入", "页面布局", "公式", "数据", "审阅", "视图", "开发工具", "PDF工具集", "金山文档"].map(t => (
          <RibbonTab key={t} $on={t === "开始"}>{t}</RibbonTab>
        ))}
        <Tell><Bulb />告诉我您想要做什么...</Tell>
        <Share><PersonPlus />共享</Share>
      </TabRow>

      <Ribbon>
        <Group $w={118}>
          <GroupBody>
            <Big $w={50}><PasteWrap><PasteIcon /></PasteWrap><BigLabel>粘贴</BigLabel><BigCaret /></Big>
            <Stack $w={67}>
              <StackRow><StackIcon $w={19}><CutIcon /></StackIcon>剪切</StackRow>
              <StackRow><StackIcon $w={19}><CopyIcon /></StackIcon>复制<Tool $w={23}><Caret /></Tool></StackRow>
              <StackRow><StackIcon $w={19}><BrushIcon /></StackIcon>格式刷</StackRow>
            </Stack>
          </GroupBody>
          <GroupFooter $launch><GroupName>剪贴板</GroupName><Launcher /></GroupFooter>
        </Group>

        <Group $w={250}>
          <ColBody $pt={8} $pl={3}>
            <Tools $h={22}>
              <Combo $w={144}><ComboValue>等线</ComboValue><ComboDrop><Caret $c="#a8a8a8" /></ComboDrop></Combo>
              <ComboJoin $w={40}><ComboSize>18</ComboSize><ComboDrop><Caret $c="#a8a8a8" /></ComboDrop></ComboJoin>
              <Tool $w={22} $dim><ALetter s={16} /><Tri dir="u" c="#a6a6a6" s={5} /></Tool>
              <Tool $w={22} $dim><ALetter s={13} /><Tri dir="d" c="#a6a6a6" s={5} /></Tool>
            </Tools>
            <Tools $h={18} $mt={13}>
              <Tool $w={22} $dim><Letter>B</Letter></Tool>
              <Tool $w={22} $dim><Letter $i>I</Letter></Tool>
              <Tool $w={22} $dim><Letter $u>U</Letter></Tool>
              <Tool $w={12}><Caret $c="#bbb" /></Tool>
              <VSep />
              <Tool $w={20}><BorderIcon /></Tool>
              <Tool $w={12}><Caret /></Tool>
              <VSep />
              <Tool $w={20}><FillIcon /></Tool>
              <Tool $w={12}><Caret $c="#bbb" /></Tool>
              <Tool $w={22} $dim><ALetter s={16} /></Tool>
              <Tool $w={12}><Caret $c="#bbb" /></Tool>
              <VSep />
              <Tool $w={22}><Wen>wén<WenHan>文</WenHan></Wen></Tool>
              <Tool $w={8}><Caret /></Tool>
            </Tools>
          </ColBody>
          <GroupFooter $launch><GroupName>字体</GroupName><Launcher /></GroupFooter>
        </Group>

        <Group $w={239}>
          <ColBody $pt={9} $pl={7}>
            <Tools $h={20}>
              <Tool $w={20}><Lines kind="t" /></Tool><Tool $w={20}><Lines kind="m" /></Tool><Tool $w={22}><Lines kind="b" /></Tool>
              <VSep />
              <Tool $w={20}><OrientIcon /></Tool><Tool $w={8}><Caret $c="#bbb" /></Tool>
              <VSep $ml={19} $mr={7} />
              <WrapIcon /><ToolText $dim $ml={4}>自动换行</ToolText>
            </Tools>
            <Tools $h={20} $mt={11}>
              <Tool $w={20}><Lines kind="l" /></Tool><Tool $w={20}><Lines kind="c" /></Tool><Tool $w={22}><Lines kind="r" /></Tool>
              <VSep />
              <Tool $w={20}><Indent out /></Tool><Tool $w={24}><Indent /></Tool>
              <VSep $ml={3} $mr={7} />
              <MergeIcon /><ToolText $ml={5}>合并后居中</ToolText>
              <Tool $w={24}><Caret /></Tool>
            </Tools>
          </ColBody>
          <GroupFooter $launch><GroupName>对齐方式</GroupName><Launcher /></GroupFooter>
        </Group>

        <Group $w={140}>
          <ColBody $pt={8} $pl={4}>
            <Tools $h={22}><Combo $w={131}><ComboValue>常规</ComboValue><ComboDrop><Caret $c="#a8a8a8" /></ComboDrop></Combo></Tools>
            <Tools $h={20} $mt={11}>
              <Tool $w={23}><MoneyIcon /></Tool><Tool $w={8}><Caret /></Tool>
              <Tool $w={28}><Letter $s={15} $w={400} $c="#444">%</Letter></Tool>
              <Tool $w={14}><Letter $s={15} $c="#444">,</Letter></Tool>
              <VSep $ml={9} $mr={7} />
              <Tool $w={16}><Decimal more /></Tool>
              <Tool $w={21}><Decimal /></Tool>
            </Tools>
          </ColBody>
          <GroupFooter $launch><GroupName>数字</GroupName><Launcher /></GroupFooter>
        </Group>

        <Group $w={357}>
          <GroupBody>
            <Big $w={60}><CondIcon /><BigLabel>条件格式</BigLabel><BigCaret /></Big>
            <Big $w={56}>
              <TableIcon />
              <BigLabel>套用<br />表格格式 <Caret /></BigLabel>
            </Big>
            <Gallery>
              <GalleryCells>
                <StyleCell $bg="#ff99cc" $c="#b000b0">差_Sheet4</StyleCell>
                <StyleCell $bg="#ccffcc" $c="#22a000">好_Sheet4</StyleCell>
                <StyleCell>千位分隔 2</StyleCell>
                <StyleCell $box>常规</StyleCell>
              </GalleryCells>
              <GalleryScroll>
                <GalleryBtn $bg="#f1f1f1"><Tri dir="u" c="#c4c4c4" s={6} /></GalleryBtn>
                <GalleryBtn><Tri dir="d" c="#666" s={6} /></GalleryBtn>
                <GalleryBtn><Tri dir="d" c="#666" s={6} /></GalleryBtn>
              </GalleryScroll>
            </Gallery>
          </GroupBody>
          <GroupFooter><GroupName>样式</GroupName></GroupFooter>
        </Group>

        <Group $w={135}>
          <GroupBody $pl={4}>
            <Big $w={42}><CellIcon mode="ins" /><BigLabel>插入</BigLabel><BigCaret /></Big>
            <Big $w={42}><CellIcon mode="del" /><BigLabel>删除</BigLabel><BigCaret /></Big>
            <Big $w={42}><FormatIcon /><BigLabel>格式</BigLabel><BigCaret /></Big>
          </GroupBody>
          <GroupFooter><GroupName>单元格</GroupName></GroupFooter>
        </Group>

        <Group $w={229}>
          <GroupBody>
            <Stack $w={94} $pl={7}>
              <StackRow><StackIcon $w={19}><SigmaIcon /></StackIcon>自动求和<Tool $w={24}><Caret /></Tool></StackRow>
              <StackRow><StackIcon $w={19}><FillDown /></StackIcon>填充<Tool $w={12}><Caret /></Tool></StackRow>
              <StackRow><StackIcon $w={19}><Eraser /></StackIcon>清除<Tool $w={12}><Caret /></Tool></StackRow>
            </Stack>
            <Big $w={64}><SortIcon /><BigLabel>排序和筛选</BigLabel><BigCaret /></Big>
            <Big $w={66}><FindIcon /><BigLabel $mt={3}>查找和选择</BigLabel><BigCaret /></Big>
          </GroupBody>
          <GroupFooter><GroupName>编辑</GroupName></GroupFooter>
        </Group>

        <Group $w={55}>
          <GroupBody>
            <Big $w={54}><InvoiceIcon /><BigLabel>发票<br />查验</BigLabel></Big>
          </GroupBody>
          <GroupFooter><GroupName>发票查验</GroupName></GroupFooter>
        </Group>
        <Collapse><Chevron up c="#555" /></Collapse>
      </Ribbon>

      <FormulaBar>
        <NameBox>J3<Caret /></NameBox>
        <Dots>⋮</Dots>
        <FxBox><CloseGlyph s={11} c="#bdbdbd" w={1.6} /><S w={13} h={12}><path d="M1 7l4 4 7-10" stroke="#bdbdbd" strokeWidth="1.6" /></S><Fx>fx</Fx></FxBox>
        <FormulaInput>60<Chevron c="#9a9a9a" /></FormulaInput>
      </FormulaBar>

      <SheetArea>
        <Grid>
          {grid}
          <Selection><Handle /></Selection>
        </Grid>
        <VScroll>
          <ScrollBtn><Tri dir="u" c="#666" /></ScrollBtn>
          <Thumb />
          <Fill />
          <ScrollBtn><Tri dir="d" c="#666" /></ScrollBtn>
        </VScroll>
      </SheetArea>

      <TabsBar>
        <Nav><Tri dir="l" c="#bcbcbc" /><Tri dir="r" c="#bcbcbc" /></Nav>
        {tabs.map(t => <SheetTab key={t.t} $w={t.w} $bg={t.bg} $on={t.on}>{t.t}</SheetTab>)}
        <AddSheet><S w={10} h={10}><path d="M5 0v10M0 5h10" stroke="#666" strokeWidth="1.3" /></S></AddSheet>
        <HDots>⋮</HDots>
        <HScroll>
          <HBtns><HBtn $w={14}><Tri dir="l" c="#555" /></HBtn><HBtn $w={18} /></HBtns>
          <HBtn $w={14}><Tri dir="r" c="#555" /></HBtn>
        </HScroll>
      </TabsBar>

      <Status>
        <StatusLeft><span>就绪</span><span>数字</span><MacroIcon /></StatusLeft>
        <Stat $ml={0}>平均值: 75.75</Stat>
        <Stat $ml={56}>计数: 24</Stat>
        <Stat>数值计数: 24</Stat>
        <Stat>最小值: 50</Stat>
        <Stat>最大值: 99</Stat>
        <Stat>求和: 1818</Stat>
        <Views>
          <ViewBtn $on><NormalView /></ViewBtn>
          <ViewBtn><LayoutView /></ViewBtn>
          <ViewBtn><BreakView /></ViewBtn>
        </Views>
        <Zoom>
          <S w={8} h={2}><rect width="8" height="2" fill="#555" /></S>
          <ZoomTrack><ZoomThumb /><ZoomTick /></ZoomTrack>
          <S w={10} h={10}><path d="M5 0v10M0 5h10" stroke="#555" strokeWidth="2" /></S>
          <ZoomText>60%</ZoomText>
        </Zoom>
      </Status>

      <Dialog>
        <DlgTitle>
          <DlgTitleText>条件格式规则管理器</DlgTitleText>
          <DlgHelp>?</DlgHelp>
          <DlgClose><CloseGlyph s={11} c="#222" w={1.1} /></DlgClose>
        </DlgTitle>
        <ShowRow>
          <ShowLabel>显示其格式规则(<u>S</u>):</ShowLabel>
          <ShowSelect><ShowValue>当前选择</ShowValue><ShowBtn><Chevron c="#555" s={9} /></ShowBtn></ShowSelect>
        </ShowRow>
        <Panel>
          <PanelBar>
            <DlgBtn $w={110}><DialogGridIcon /><span>新建规则(<u>N</u>)...</span></DlgBtn>
            <DlgBtn $w={111}><EditRuleIcon /><span>编辑规则(<u>E</u>)...</span></DlgBtn>
            <DlgBtn $w={111}><CloseGlyph s={15} c="#666" w={1.4} /><span>删除规则(<u>D</u>)</span></DlgBtn>
            <DlgBtn $w={26}><Tri dir="u" c="#777" s={10} /></DlgBtn>
            <DlgBtn $w={26}><Tri dir="d" c="#777" s={10} /></DlgBtn>
          </PanelBar>
          <ListBox>
            <ListHead>
              <ListHeadCell>规则(按所示顺序应用)</ListHeadCell>
              <ListHeadCell>格式</ListHeadCell>
              <ListHeadCell>应用于</ListHeadCell>
              <ListHeadCell>如果为真则停止</ListHeadCell>
            </ListHead>
            {ruleData.map((r, i) => (
              <RuleRow key={r.n} $on={r.on} $last={i === 2}>
                <RuleName>{r.n}</RuleName>
                <Preview $bg={r.bg} $c={r.c}><span>微软卓越</span><span>AaBbCc</span></Preview>
                <Applies><AppliesText>=$J$3:$J$26</AppliesText><Picker><PickerIcon /></Picker></Applies>
                <Check />
              </RuleRow>
            ))}
          </ListBox>
        </Panel>
        <DlgFoot>
          <FootBtn $kind="primary">确定</FootBtn>
          <FootBtn>关闭</FootBtn>
          <FootBtn $kind="off">应用</FootBtn>
        </DlgFoot>
      </Dialog>

      <Watermark>
        <WmCn>电脑技术网</WmCn>
        <WmUrl>www.tagxp.com</WmUrl>
      </Watermark>
      <TagTile>TAG</TagTile>
      <Brand>
        <Swirl />
        <BrandText>
          <BrandCn>极光下载站</BrandCn>
          <BrandUrl>www.xz7.com</BrandUrl>
        </BrandText>
      </Brand>

      <Arrows width="1593" height="1036">
        {arrowList.map(([a, b, c, d], i) => <polygon key={i} points={arrowPoly(a, b, c, d)} fill="#ea1318" />)}
      </Arrows>
      <Cursor width="14" height="21" viewBox="0 0 14 21"><path d="M1 1v15l4-3 3 6 2-1-3-6h5z" fill="#fff" stroke="#111" /></Cursor>
    </Window>
  );
}
